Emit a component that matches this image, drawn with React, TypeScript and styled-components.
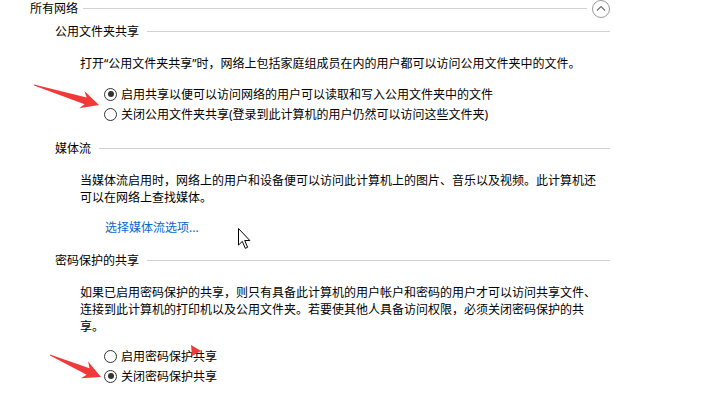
import styled, { createGlobalStyle } from 'styled-components';

const GlobalStyle = createGlobalStyle`
  html, body {
    margin: 0;
    padding: 0;
    background: #fff;
    overflow: hidden;
  }
  body {
    font-family: "Noto Sans", "Noto Sans CJK SC", sans-serif;
    font-size: 12px;
    color: #000;
  }
`;

type Choice = { label: string; checked?: boolean };

const sections: {
  title: string;
  text: string;
  options?: Choice[];
  link?: string;
  gap: number;
}[] = [
  {
    title: '公用文件夹共享',
    text: '打开“公用文件夹共享”时，网络上包括家庭组成员在内的用户都可以访问公用文件夹中的文件。',
    options: [
      { label: '启用共享以便可以访问网络的用户可以读取和写入公用文件夹中的文件', checked: true },
      { label: '关闭公用文件夹共享(登录到此计算机的用户仍然可以访问这些文件夹)' },
    ],
    gap: 12,
  },
  {
    title: '媒体流',
    text: '当媒体流启用时，网络上的用户和设备便可以访问此计算机上的图片、音乐以及视频。此计算机还可以在网络上查找媒体。',
    link: '选择媒体流选项...',
    gap: 13,
  },
  {
    title: '密码保护的共享',
    text: '如果已启用密码保护的共享，则只有具备此计算机的用户帐户和密码的用户才可以访问共享文件、连接到此计算机的打印机以及公用文件夹。若要使其他人具备访问权限，必须关闭密码保护的共享。',
    options: [
      { label: '启用密码保护共享' },
      { label: '关闭密码保护共享', checked: true },
    ],
    gap: 11,
  },
];

export default function App() {
  return (
    <>
      <GlobalStyle />
      <Page>
        <TopHeader>
          <TopTitle>所有网络</TopTitle>
          <Rule />
          <Collapse>
            <svg width="18" height="18" viewBox="0 0 18 18">
              <circle cx="9" cy="9" r="8.5" fill="#fff" stroke="#9a9a9a" />
              <polyline points="5,10.5 9,6.5 13,10.5" fill="none" stroke="#6e6e6e" strokeWidth="1.1" />
            </svg>
          </Collapse>
        </TopHeader>

        {sections.map((s, i) => (
          <Section key={s.title} first={i === 0}>
            <SectionHeader>
              <SectionTitle>{s.title}</SectionTitle>
              <Rule />
            </SectionHeader>
            <Description>{s.text}</Description>
            {s.options && (
              <Options gap={s.gap}>
                {s.options.map((o) => (
                  <Option key={o.label}>
                    <Radio checked={o.checked} />
                    <span>{o.label}</span>
                  </Option>
                ))}
              </Options>
            )}
            {s.link && <Link gap={s.gap}>{s.link}</Link>}
          </Section>
        ))}

        {/* 截图上的标注箭头和鼠标 */}
        <Overlay width="707" height="411" viewBox="0 0 707 411">
          <polygon
            points="34,84.5 86.6,97.6 84.4,91.1 99,105 79.2,108.3 84.6,104.2 34,85.5"
            fill="#f03a3a"
          />
          <polygon
            points="50,354.5 89.5,368.3 88.1,361.6 101,377 80.9,378.2 86.7,374.7 50,355.5"
            fill="#f03a3a"
          />
          <polygon points="191,345 201,351 192,356" fill="#f03a3a" />
          <path
            d="M238.5 228.5 L238.5 245 L242.3 241.4 L245.3 248.3 L247.6 247.3 L244.7 240.5 L249.8 240.5 Z"
            fill="#fff"
            stroke="#000"
            strokeWidth="1"
            strokeLinejoin="miter"
          />
        </Overlay>
      </Page>
    </>
  );
}

const Page = styled.div`
  position: relative;
  width: 707px;
  height: 411px;
  box-sizing: border-box;
  padding-left: 30px;
`;

const TopHeader = styled.div`
  display: flex;
  align-items: center;
  width: 580px;
  height: 17px;
  line-height: 17px;
`;

const TopTitle = styled.span`
  white-space: nowrap;
  margin-right: 5px;
`;

const Rule = styled.div`
  flex: 1;
  height: 1px;
  background: #d2d2d2;
`;

const Collapse = styled.div`
  width: 18px;
  height: 18px;
  margin-left: 5px;
  display: flex;
`;

const Section = styled.div<{ first?: boolean }>`
  margin-top: ${({ first }) => (first ? '6px' : '16px')};
  padding-left: 25px;
  width: 555px;
`;

const SectionHeader = styled.div`
  display: flex;
  align-items: center;
  height: 17px;
  line-height: 17px;
`;

const SectionTitle = styled.span`
  white-space: nowrap;
  margin-right: 8px;
`;

const Description = styled.p`
  margin: 15px 0 0 25px;
  width: 520px;
  line-height: 17px;
`;

const Options = styled.div<{ gap: number }>`
  margin-top: ${({ gap }) => gap}px;
  padding-left: 49px;
  display: flex;
  flex-direction: column;
`;

const Option = styled.label`
  display: flex;
  align-items: center;
  height: 20px;
  gap: 4px;
  white-space: nowrap;
`;

const Radio = styled.span<{ checked?: boolean }>`
  position: relative;
  width: 13px;
  height: 13px;
  box-sizing: border-box;
  border: 1px solid #333;
  border-radius: 50%;
  background: #fff;
  flex-shrink: 0;

  &::after {
    content: '';
    display: ${({ checked }) => (checked ? 'block' : 'none')};
    position: absolute;
    left: 2.5px;
    top: 2.5px;
    width: 6px;
    height: 6px;
    border-radius: 50%;
    background: #333;
  }
`;

const Link = styled.div<{ gap: number }>`
  margin-top: ${({ gap }) => gap}px;
  padding-left: 50px;
  line-height: 17px;
  color: #0a66cc;
  cursor: pointer;
`;

const Overlay = styled.svg`
  position: absolute;
  left: 0;
  top: 0;
  pointer-events: none;
`;
